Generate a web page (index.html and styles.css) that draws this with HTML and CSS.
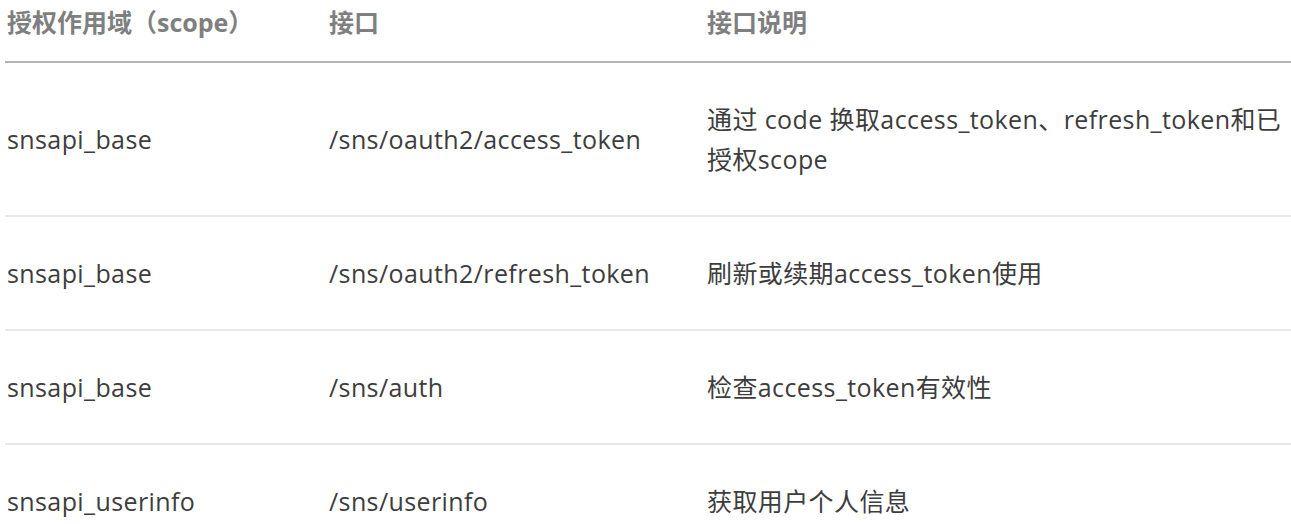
FILE: index.html
```html
<!DOCTYPE html>
<html lang="zh-CN">
<head>
<meta charset="utf-8">
<title>scope</title>
<link rel="stylesheet" href="styles.css">
</head>
<body>
<table class="api-table">
  <colgroup>
    <col class="c1"><col class="c2"><col class="c3">
  </colgroup>
  <thead>
    <tr>
      <th>授权作用域（scope）</th>
      <th>接口</th>
      <th>接口说明</th>
    </tr>
  </thead>
  <tbody>
    <tr>
      <td>snsapi_base</td>
      <td>/sns/oauth2/access_token</td>
      <td>通过 code 换取access_token、refresh_token和已授权scope</td>
    </tr>
    <tr>
      <td>snsapi_base</td>
      <td>/sns/oauth2/refresh_token</td>
      <td>刷新或续期access_token使用</td>
    </tr>
    <tr>
      <td>snsapi_base</td>
      <td>/sns/auth</td>
      <td>检查access_token有效性</td>
    </tr>
    <tr>
      <td>snsapi_userinfo</td>
      <td>/sns/userinfo</td>
      <td>获取用户个人信息</td>
    </tr>
  </tbody>
</table>
</body>
</html>
```

FILE: styles.css
```css
html, body {
  margin: 0;
  padding: 0;
  background: #ffffff;
}

body {
  font-family: "Open Sans", "Noto Sans CJK SC", sans-serif;
  font-size: 25px;
  line-height: 40px;
  color: #3d3d3d;
  overflow: hidden;
}

.api-table {
  margin-left: 5px;
  width: 1286px;
  border-collapse: collapse;
  table-layout: fixed;
}

.c1 { width: 322px; }
.c2 { width: 378px; }
.c3 { width: 586px; }

.api-table th {
  text-align: left;
  font-weight: 700;
  color: #7f7f7f;
  padding: 2px 2px 19px 2px;
  border-bottom: 2px solid #b3b3b3;
}

.api-table td {
  text-align: left;
  vertical-align: middle;
  padding: 36px 2px;
  letter-spacing: 0.4px;
  border-bottom: 2px solid #e8e8e8;
}
```
